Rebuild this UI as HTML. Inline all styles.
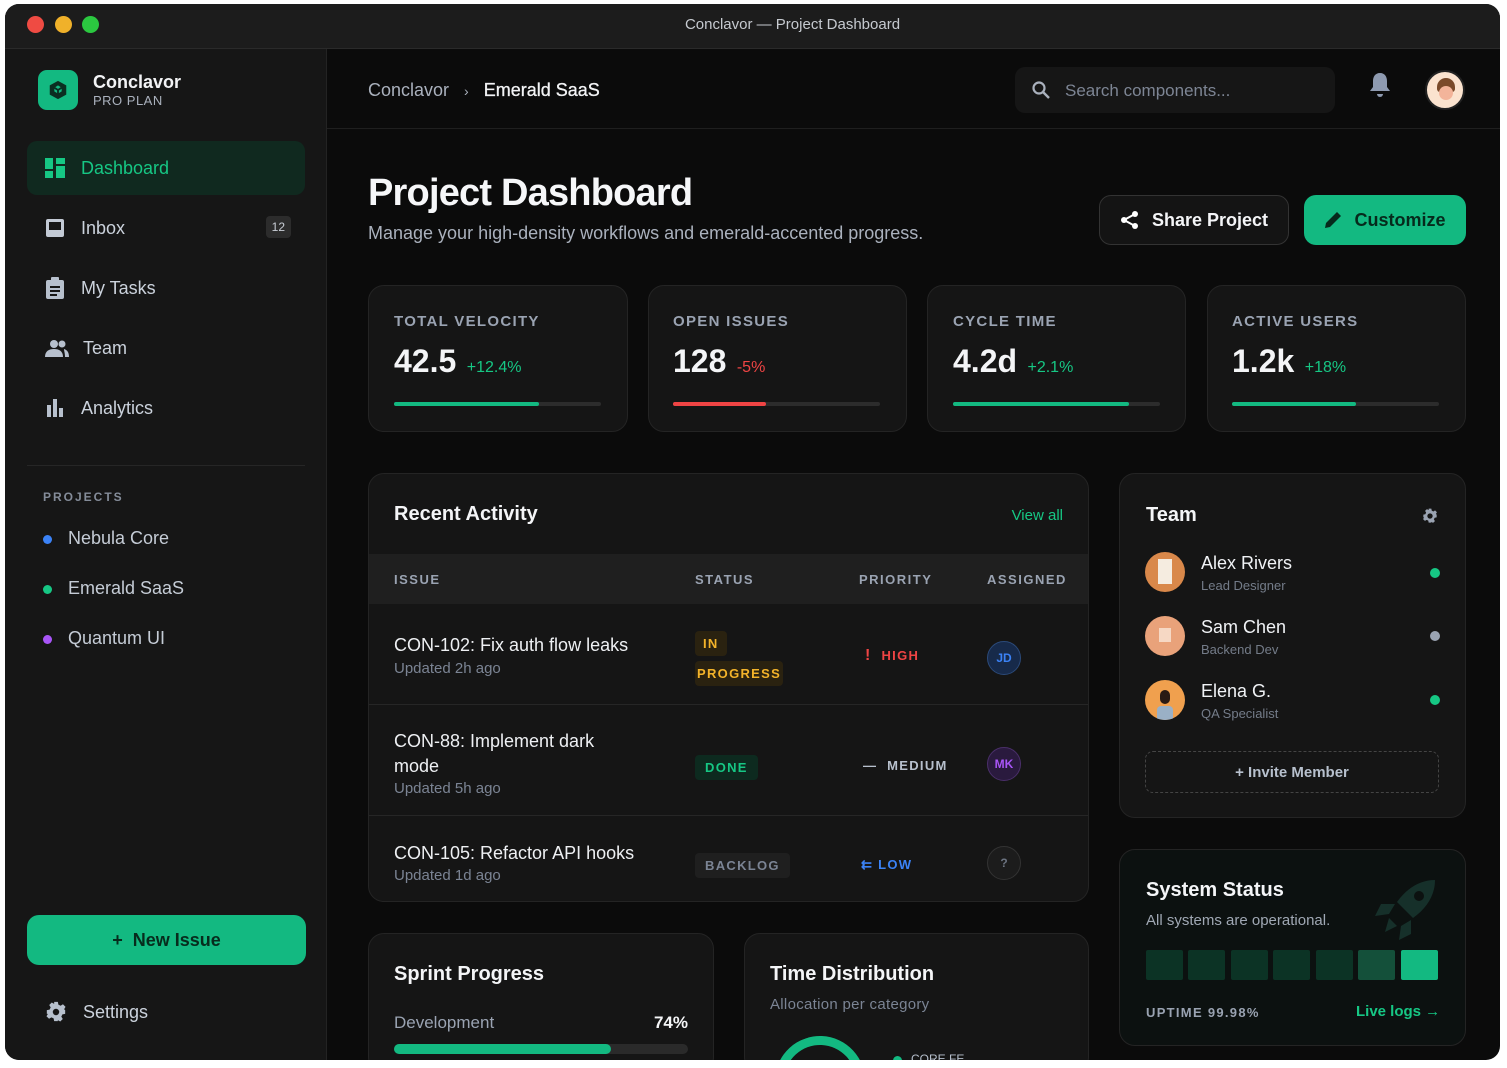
<!DOCTYPE html>
<html><head><meta charset="utf-8"><style>
*{box-sizing:border-box;margin:0;padding:0}
body{width:1507px;height:1068px;background:#fff;font-family:"Liberation Sans",sans-serif;position:relative;overflow:hidden;color:#e8eaee}
.a{position:absolute}
.win{left:5px;top:4px;width:1495px;height:1056px;border-radius:14px;overflow:hidden;background:#0b0b0b}
.tb{left:0;top:0;width:1495px;height:45px;background:#1c1c1c;border-bottom:1px solid #2a2a2a}
.dot{width:17px;height:17px;border-radius:50%;top:12px}
.side{left:0;top:45px;width:322px;height:1011px;background:#161616;border-right:1px solid #232323}
.nav{left:22px;width:278px;height:54px;border-radius:10px;display:flex;align-items:center;padding-left:18px;font-size:18px;color:#cbd2dc}
.nav svg{margin-right:16px}
.card{background:#151515;border:1px solid #242424;border-radius:16px}
.lbl{font-size:15px;font-weight:bold;letter-spacing:1.3px;color:#9aa3b2}
.big{font-size:32px;font-weight:bold;color:#f4f5f7}
.bar{height:4px;background:#2c2c2c;border-radius:2px;width:207px}
.th{font-size:13px;font-weight:bold;letter-spacing:1.5px;color:#9aa3b2}
.it{font-size:18px;color:#eef0f3}
.sub{font-size:15px;color:#7b8494}
.pill{font-size:13px;font-weight:bold;letter-spacing:1.3px;border-radius:4px;padding:5px 10px}
.av{width:34px;height:34px;border-radius:50%;font-size:12px;font-weight:bold;display:flex;align-items:center;justify-content:center}
.pd{width:9px;height:9px;border-radius:50%}
.sq{width:37px;height:30px;border-radius:2px;background:#0c3325;top:100px}
</style></head><body>
<div class="a win">
 <div class="a tb">
  <div class="a dot" style="left:22px;background:#ef4b43"></div>
  <div class="a dot" style="left:50px;background:#f0b12a"></div>
  <div class="a dot" style="left:77px;background:#2bc840"></div>
  <div class="a" style="left:0;width:1575px;top:12px;text-align:center;font-size:15px;color:#c6cad0">Conclavor — Project Dashboard</div>
 </div>
 <div class="a side">
  <div class="a" style="left:33px;top:21px;width:40px;height:40px;border-radius:9px;background:#13b981;display:flex;align-items:center;justify-content:center">
   <svg width="22" height="22" viewBox="0 0 24 24"><path d="M12 2l9 5v10l-9 5-9-5V7z" fill="#0b2e21"/><path d="M12 7l4 2.5v4L12 16l-4-2.5v-4z" fill="#13b981"/><path d="M12 12v5M12 12l-4-2.5M12 12l4-2.5" stroke="#0b2e21" stroke-width="2"/></svg>
  </div>
  <div class="a" style="left:88px;top:23px;font-size:18px;font-weight:bold;color:#f2f3f5">Conclavor</div>
  <div class="a" style="left:88px;top:44px;font-size:13px;color:#aab1bd;letter-spacing:.5px">PRO PLAN</div>
  <div class="a nav" style="top:92px;background:#10291f;color:#16c784">
   <svg width="20" height="20" viewBox="0 0 20 20" fill="#16c784"><rect x="0" y="0" width="8" height="11"/><rect x="11" y="0" width="9" height="6"/><rect x="0" y="13" width="8" height="7"/><rect x="11" y="8" width="9" height="12"/></svg>Dashboard</div>
  <div class="a nav" style="top:152px"><svg width="20" height="20" viewBox="0 0 20 20"><rect x="1" y="1" width="18" height="18" rx="2" fill="#c3cad5"/><rect x="4" y="4" width="12" height="8" fill="#161616"/></svg>Inbox
   <span class="a" style="right:14px;top:15px;background:#2c2c2c;border-radius:4px;font-size:12px;padding:4px 6px;color:#c9ced6">12</span></div>
  <div class="a nav" style="top:212px"><svg width="20" height="22" viewBox="0 0 20 22"><rect x="1" y="3" width="18" height="19" rx="2" fill="#b7c0cd"/><rect x="6" y="0" width="8" height="5" rx="1" fill="#b7c0cd"/><path d="M5 10h10M5 14h10M5 18h7" stroke="#161616" stroke-width="2"/></svg>My Tasks</div>
  <div class="a nav" style="top:272px"><svg width="24" height="18" viewBox="0 0 24 18" fill="#b7c0cd" style="margin-right:14px"><circle cx="9" cy="5" r="4"/><path d="M0 18c0-6 4-8 9-8s9 2 9 8z"/><circle cx="17" cy="5" r="3.5"/><path d="M19 10c3 1 5 3 5 8h-4c0-4-1-6-1-8z"/></svg>Team</div>
  <div class="a nav" style="top:332px"><svg width="20" height="18" viewBox="0 0 20 18" fill="#b7c0cd"><rect x="2" y="6" width="4" height="12"/><rect x="8" y="0" width="4" height="18"/><rect x="14" y="9" width="4" height="9"/></svg>Analytics</div>
  <div class="a" style="left:22px;top:416px;width:278px;height:1px;background:#262626"></div>
  <div class="a" style="left:38px;top:441px;font-size:12px;font-weight:bold;letter-spacing:2px;color:#848c99">PROJECTS</div>
  <div class="a pd" style="left:38px;top:486px;background:#3b82f6"></div><div class="a" style="left:63px;top:479px;font-size:18px;color:#c5ccd6">Nebula Core</div>
  <div class="a pd" style="left:38px;top:536px;background:#16c784"></div><div class="a" style="left:63px;top:529px;font-size:18px;color:#c5ccd6">Emerald SaaS</div>
  <div class="a pd" style="left:38px;top:586px;background:#a855f7"></div><div class="a" style="left:63px;top:579px;font-size:18px;color:#c5ccd6">Quantum UI</div>
  <div class="a" style="left:22px;top:866px;width:279px;height:50px;border-radius:12px;background:#13b981;color:#072c1d;font-size:18px;font-weight:bold;display:flex;align-items:center;justify-content:center">+&nbsp;&nbsp;New Issue</div>
  <div class="a nav" style="top:936px"><svg width="22" height="22" viewBox="0 0 24 24" fill="#b7c0cd"><path d="M10 1h4l.6 3 2.4 1.2 2.6-1.6 2.8 2.8-1.6 2.6L22 10v4l-3 .6-1.2 2.4 1.6 2.6-2.8 2.8-2.6-1.6L14 22h-4l-.6-3-2.4-1.2-2.6 1.6-2.8-2.8 1.6-2.6L2 14v-4l3-.6 1.2-2.4-1.6-2.6 2.8-2.8 2.6 1.6z"/><circle cx="12" cy="12" r="3.5" fill="#161616"/></svg>Settings</div>
 </div>
 <div class="a" style="left:322px;top:124px;width:1173px;height:1px;background:#1f1f1f"></div>
 <div class="a" style="left:363px;top:76px;font-size:18px;color:#aab1bd">Conclavor &nbsp;&nbsp;<span style="font-size:14px">›</span>&nbsp;&nbsp; <span style="color:#f2f3f5;-webkit-text-stroke:.3px #f2f3f5">Emerald SaaS</span></div>
 <div class="a" style="left:1010px;top:63px;width:320px;height:46px;border-radius:10px;background:#161616"></div>
 <svg class="a" style="left:1027px;top:77px" width="18" height="18" viewBox="0 0 18 18"><circle cx="7" cy="7" r="5.5" stroke="#aab1bd" stroke-width="2.2" fill="none"/><path d="M11 11l6 6" stroke="#aab1bd" stroke-width="2.4"/></svg>
 <div class="a" style="left:1060px;top:77px;font-size:17px;color:#7d8594">Search components...</div>
 <svg class="a" style="left:1364px;top:68px" width="22" height="26" viewBox="0 0 22 26"><path d="M11 1c-5 0-7 4-7 8v6l-3 4h20l-3-4V9c0-4-2-8-7-8z" fill="#8e9ab0"/><path d="M8 22a3 3 0 006 0z" fill="#8e9ab0"/></svg>
 <div class="a" style="left:1420px;top:66px;width:40px;height:40px;border-radius:50%;background:#fbe3cf;border:2px solid #222;overflow:hidden"><div class="a" style="left:10px;top:6px;width:18px;height:14px;border-radius:9px 9px 3px 3px;background:#7a4a2a"></div><div class="a" style="left:12px;top:14px;width:14px;height:14px;border-radius:50%;background:#f3b49a"></div></div>
 <div class="a" style="left:363px;top:168px;font-size:38px;font-weight:bold;color:#f6f7f9;letter-spacing:-.8px">Project Dashboard</div>
 <div class="a" style="left:363px;top:219px;font-size:18px;color:#aab1bd">Manage your high-density workflows and emerald-accented progress.</div>
 <div class="a" style="left:1094px;top:191px;width:190px;height:50px;border-radius:12px;background:#141414;border:1px solid #333;display:flex;align-items:center;justify-content:center;font-size:18px;font-weight:bold;color:#f4f5f7">
  <svg width="20" height="20" viewBox="0 0 20 20" style="margin-right:12px"><circle cx="15" cy="4" r="3" fill="#fff"/><circle cx="4" cy="10" r="3" fill="#fff"/><circle cx="15" cy="16" r="3" fill="#fff"/><path d="M15 4L4 10l11 6" stroke="#fff" stroke-width="2" fill="none"/></svg>Share Project</div>
 <div class="a" style="left:1299px;top:191px;width:162px;height:50px;border-radius:12px;background:#13b981;display:flex;align-items:center;justify-content:center;font-size:18px;font-weight:bold;color:#062a1c">
  <svg width="18" height="18" viewBox="0 0 18 18" style="margin-right:12px"><path d="M1 17l1-5L13 1l4 4L6 16z" fill="#062a1c"/></svg>Customize</div>
 <div class="a card" style="left:363px;top:281px;width:260px;height:147px"></div>
 <div class="a card" style="left:643px;top:281px;width:259px;height:147px"></div>
 <div class="a card" style="left:922px;top:281px;width:259px;height:147px"></div>
 <div class="a card" style="left:1202px;top:281px;width:259px;height:147px"></div>
 <div class="a lbl" style="left:389px;top:309px">TOTAL VELOCITY</div>
 <div class="a lbl" style="left:668px;top:309px">OPEN ISSUES</div>
 <div class="a lbl" style="left:948px;top:309px">CYCLE TIME</div>
 <div class="a lbl" style="left:1227px;top:309px">ACTIVE USERS</div>
 <div class="a" style="left:389px;top:339px"><span class="big">42.5</span> <span style="font-size:16px;color:#16c784;margin-left:6px">+12.4%</span></div>
 <div class="a" style="left:668px;top:339px"><span class="big">128</span> <span style="font-size:16px;color:#ef4444;margin-left:6px">-5%</span></div>
 <div class="a" style="left:948px;top:339px"><span class="big">4.2d</span> <span style="font-size:16px;color:#16c784;margin-left:6px">+2.1%</span></div>
 <div class="a" style="left:1227px;top:339px"><span class="big">1.2k</span> <span style="font-size:16px;color:#16c784;margin-left:6px">+18%</span></div>
 <div class="a bar" style="left:389px;top:398px"><div style="width:145px;height:4px;background:#13b981;border-radius:2px"></div></div>
 <div class="a bar" style="left:668px;top:398px"><div style="width:93px;height:4px;background:#ef4444;border-radius:2px"></div></div>
 <div class="a bar" style="left:948px;top:398px"><div style="width:176px;height:4px;background:#13b981;border-radius:2px"></div></div>
 <div class="a bar" style="left:1227px;top:398px"><div style="width:124px;height:4px;background:#13b981;border-radius:2px"></div></div>
 <div class="a card" style="left:363px;top:469px;width:721px;height:429px;overflow:hidden">
  <div class="a" style="left:25px;top:29px;font-size:20px;font-weight:bold;color:#f4f5f7">Recent Activity</div>
  <div class="a" style="right:25px;top:33px;font-size:15px;color:#16c784">View all</div>
  <div class="a" style="left:0;top:80px;width:721px;height:50px;background:#1f1f1f"></div>
  <div class="a th" style="left:25px;top:98px">ISSUE</div>
  <div class="a th" style="left:326px;top:98px">STATUS</div>
  <div class="a th" style="left:490px;top:98px">PRIORITY</div>
  <div class="a th" style="left:618px;top:98px">ASSIGNED</div>
  <div class="a" style="left:0;top:230px;width:721px;height:1px;background:#262626"></div>
  <div class="a" style="left:0;top:341px;width:721px;height:1px;background:#262626"></div>
  <div class="a it" style="left:25px;top:161px">CON-102: Fix auth flow leaks</div>
  <div class="a sub" style="left:25px;top:186px">Updated 2h ago</div>
  <div class="a pill" style="left:326px;top:157px;background:#2a2210;color:#f3b32a;padding:5px 8px">IN</div>
  <div class="a pill" style="left:326px;top:187px;background:#2a2210;color:#f3b32a;padding:5px 2px">PROGRESS</div>
  <div class="a pill" style="left:496px;top:173px;color:#ef4444;padding:0"><span style="font-size:16px">!</span>&nbsp;&nbsp;HIGH</div>
  <div class="a av" style="left:618px;top:167px;background:#172a4a;border:1px solid #2b4a7a;color:#3b82f6">JD</div>
  <div class="a it" style="left:25px;top:255px;line-height:25px">CON-88: Implement dark<br>mode</div>
  <div class="a sub" style="left:25px;top:306px">Updated 5h ago</div>
  <div class="a pill" style="left:326px;top:281px;background:#0d2a1f;color:#16c784">DONE</div>
  <div class="a pill" style="left:494px;top:284px;color:#b7c0cd;padding:0">—&nbsp; MEDIUM</div>
  <div class="a av" style="left:618px;top:273px;background:#2a1a3e;border:1px solid #4a2f6a;color:#a855f7">MK</div>
  <div class="a it" style="left:25px;top:369px">CON-105: Refactor API hooks</div>
  <div class="a sub" style="left:25px;top:393px">Updated 1d ago</div>
  <div class="a pill" style="left:326px;top:379px;background:#1f1f1f;color:#7b8494">BACKLOG</div>
  <div class="a pill" style="left:492px;top:383px;color:#3b82f6;padding:0">⇇ LOW</div>
  <div class="a av" style="left:618px;top:372px;background:#1c1c1c;border:1px solid #333;color:#6b7380">?</div>
 </div>
 <div class="a card" style="left:1114px;top:469px;width:347px;height:345px">
  <div class="a" style="left:26px;top:30px;font-size:20px;font-weight:bold;color:#f4f5f7">Team</div>
  <svg class="a" style="left:302px;top:34px" width="16" height="16" viewBox="0 0 24 24" fill="#9aa3b2"><path d="M10 1h4l.6 3 2.4 1.2 2.6-1.6 2.8 2.8-1.6 2.6L22 10v4l-3 .6-1.2 2.4 1.6 2.6-2.8 2.8-2.6-1.6L14 22h-4l-.6-3-2.4-1.2-2.6 1.6-2.8-2.8 1.6-2.6L2 14v-4l3-.6 1.2-2.4-1.6-2.6 2.8-2.8 2.6 1.6z"/><circle cx="12" cy="12" r="4" fill="#151515"/></svg>
  <div class="a" style="left:25px;top:78px;width:40px;height:40px;border-radius:50%;background:#d9884a"><div class="a" style="left:13px;top:7px;width:14px;height:25px;background:#f5ece0"></div></div>
  <div class="a" style="left:81px;top:79px;font-size:18px;color:#f0f2f5">Alex Rivers</div>
  <div class="a" style="left:81px;top:104px;font-size:13px;color:#747c89">Lead Designer</div>
  <div class="a pd" style="left:310px;top:94px;width:10px;height:10px;background:#16c784"></div>
  <div class="a" style="left:25px;top:142px;width:40px;height:40px;border-radius:50%;background:#e9a27a"><div class="a" style="left:14px;top:12px;width:12px;height:14px;background:#f6d8c4"></div></div>
  <div class="a" style="left:81px;top:143px;font-size:18px;color:#f0f2f5">Sam Chen</div>
  <div class="a" style="left:81px;top:168px;font-size:13px;color:#747c89">Backend Dev</div>
  <div class="a pd" style="left:310px;top:157px;width:10px;height:10px;background:#9aa3b2"></div>
  <div class="a" style="left:25px;top:206px;width:40px;height:40px;border-radius:50%;background:#f0a04e;overflow:hidden"><div class="a" style="left:12px;top:26px;width:16px;height:14px;background:#9ab0c6;border-radius:4px 4px 0 0"></div><div class="a" style="left:15px;top:10px;width:10px;height:14px;background:#2a1a14;border-radius:5px"></div></div>
  <div class="a" style="left:81px;top:207px;font-size:18px;color:#f0f2f5">Elena G.</div>
  <div class="a" style="left:81px;top:232px;font-size:13px;color:#747c89">QA Specialist</div>
  <div class="a pd" style="left:310px;top:221px;width:10px;height:10px;background:#16c784"></div>
  <div class="a" style="left:25px;top:277px;width:294px;height:42px;border:1px dashed #444;border-radius:8px;display:flex;align-items:center;justify-content:center;font-size:15px;font-weight:bold;color:#b7c0cd">+ Invite Member</div>
 </div>
 <div class="a card" style="left:1114px;top:845px;width:347px;height:197px;background:#0c1110">
  <svg class="a" style="left:255px;top:28px" width="62" height="62" viewBox="0 0 62 62" fill="#16302a"><path d="M60 2C45 2 32 10 22 24l16 16C52 30 60 17 60 2z"/><circle cx="44" cy="18" r="5" fill="#0c1110"/><path d="M20 26L6 26 0 38l14-2zM36 42l0 14-12 6 2-14z"/><path d="M14 40l8 8-12 6z"/></svg>
  <div class="a" style="left:26px;top:29px;font-size:20px;font-weight:bold;color:#f4f5f7">System Status</div>
  <div class="a" style="left:26px;top:62px;font-size:15px;color:#a0a8b4">All systems are operational.</div>
  <div class="a sq" style="left:26px"></div><div class="a sq" style="left:68px"></div><div class="a sq" style="left:111px"></div><div class="a sq" style="left:153px"></div><div class="a sq" style="left:196px"></div><div class="a sq" style="left:238px;background:#14503a"></div><div class="a sq" style="left:281px;background:#13b981"></div>
  <div class="a" style="left:26px;top:155px;font-size:13px;font-weight:bold;letter-spacing:1.3px;color:#9aa3b2">UPTIME 99.98%</div>
  <div class="a" style="left:236px;top:153px;font-size:15px;font-weight:bold;color:#16c784">Live logs →</div>
 </div>
 <div class="a card" style="left:363px;top:929px;width:346px;height:140px">
  <div class="a" style="left:25px;top:29px;font-size:20px;font-weight:bold;color:#f4f5f7">Sprint Progress</div>
  <div class="a" style="left:25px;top:79px;font-size:17px;color:#9aa3b2">Development</div>
  <div class="a" style="right:25px;top:79px;font-size:17px;font-weight:bold;color:#f4f5f7">74%</div>
  <div class="a" style="left:25px;top:110px;width:294px;height:10px;border-radius:5px;background:#2a2a2a"><div style="width:217px;height:10px;border-radius:5px;background:#13b981"></div></div>
 </div>
 <div class="a card" style="left:739px;top:929px;width:345px;height:140px;overflow:hidden">
  <div class="a" style="left:25px;top:29px;font-size:20px;font-weight:bold;color:#f4f5f7">Time Distribution</div>
  <div class="a" style="left:25px;top:62px;font-size:15px;color:#7b8494;letter-spacing:.3px">Allocation per category</div>
  <div class="a" style="left:30px;top:102px;width:90px;height:90px;border-radius:50%;border:9px solid #2a2a2a;border-top-color:#13b981;border-right-color:#13b981;transform:rotate(-20deg)"></div>
  <div class="a pd" style="left:148px;top:122px;background:#13b981"></div>
  <div class="a" style="left:166px;top:118px;font-size:12px;color:#b7c0cd">CORE FE</div>
 </div>
</div>
</body></html>
